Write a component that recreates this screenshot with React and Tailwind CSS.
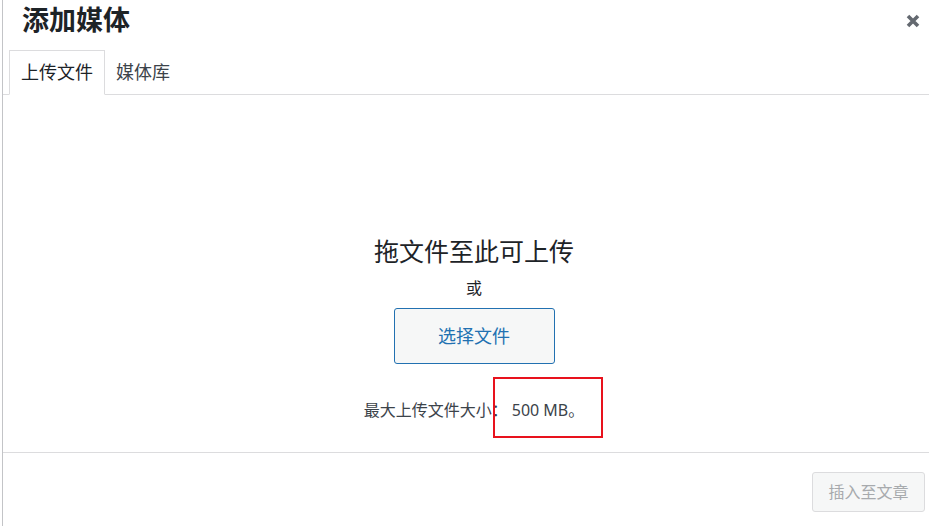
const font = { fontFamily: '"Noto Sans", "Noto Sans CJK SC", sans-serif' };

function CloseIcon() {
  return (
    <svg viewBox="0 0 14 14" className="h-[14px] w-[14px]" aria-hidden="true">
      <path d="M2 2 L12 12 M12 2 L2 12" stroke="#646970" strokeWidth="3.6" strokeLinecap="butt" />
    </svg>
  );
}

export default function App() {
  return (
    <div
      className="relative flex h-[526px] w-[929px] overflow-hidden bg-white text-[#3c434a]"
      style={font}
    >
      <div className="w-[2px] shrink-0" />
      <div className="flex min-w-0 flex-1 flex-col border-l border-[#c3c4c7]">
        {/* header */}
        <header className="flex h-[50px] shrink-0 items-start justify-between">
          <h1 className="pl-[19px] pt-[2px] text-[27px] font-bold leading-[36px] text-[#1d2327]">添加媒体</h1>
          <button className="mr-[9px] mt-[14px]" aria-label="关闭">
            <CloseIcon />
          </button>
        </header>

        {/* tabs */}
        <nav className="flex h-[45px] shrink-0 items-end border-b border-[#dcdcde] pl-[6px]">
          <button className="-mb-px flex h-[45px] w-[96px] items-center justify-center border border-b-white border-[#dcdcde] bg-white text-[18px] text-[#1d2327]">
            上传文件
          </button>
          <button className="flex h-[44px] items-center px-[11px] text-[18px] text-[#3c434a]">媒体库</button>
        </nav>

        {/* drop area */}
        <main className="flex flex-1 flex-col items-center pl-[16px] pt-[140px]">
          <h2 className="text-[25px] leading-[32px] text-[#1d2327]">拖文件至此可上传</h2>
          <p className="mt-[9px] text-[16px] leading-[24px] text-[#1d2327]">或</p>
          <button className="mt-[8px] h-[56px] w-[161px] rounded-[3px] border border-[#2271b1] bg-[#f6f7f7] text-[18px] text-[#2271b1]">
            选择文件
          </button>
          <p className="mt-[34px] text-[16px] leading-[24px] text-[#3c434a]">
            最大上传文件大小：<span className="ml-[4px]">500 MB。</span>
          </p>
        </main>

        {/* footer */}
        <footer className="flex h-[74px] shrink-0 items-start justify-end border-t border-[#dcdcde] pr-[4px] pt-[19px]">
          <button
            disabled
            className="h-[40px] w-[113px] rounded-[3px] border border-[#dcdcde] bg-[#f6f7f7] text-[16px] text-[#a7aaad]"
          >
            插入至文章
          </button>
        </footer>
      </div>

      {/* annotation box */}
      <div className="pointer-events-none absolute left-[493px] top-[377px] h-[61px] w-[110px] border-2 border-[#e8121d]" />
    </div>
  );
}
